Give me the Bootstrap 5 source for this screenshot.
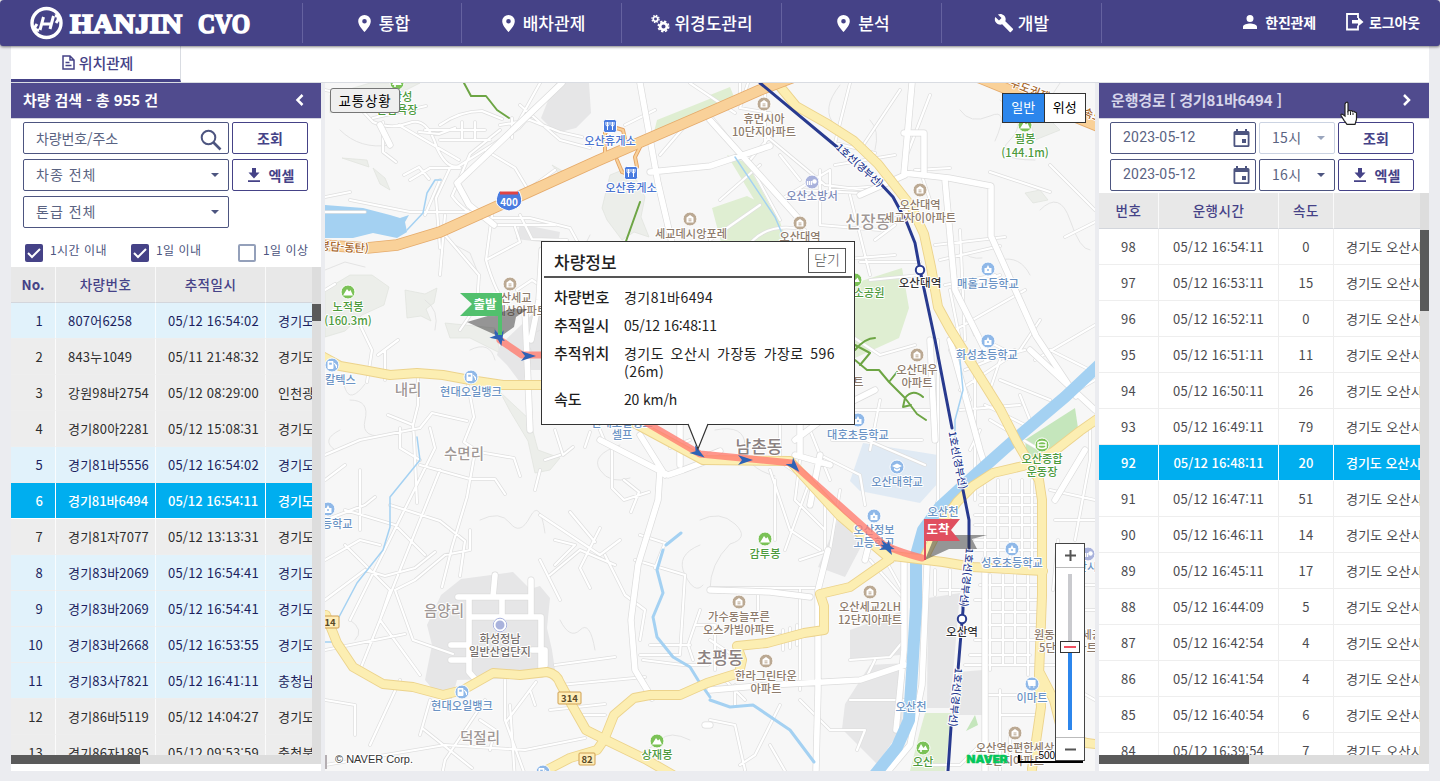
<!DOCTYPE html>
<html lang="ko">
<head>
<meta charset="utf-8">
<meta name="viewport" content="width=device-width, initial-scale=1">
<title>HANJIN CVO</title>
<link href="https://cdn.jsdelivr.net/npm/bootstrap@5.3.0/dist/css/bootstrap.min.css" rel="stylesheet">
<style>
:root{--navy:#454287;--panel:#504b8e;--ink:#2b2b2b;--line:#4d5580}
body{font-family:"Noto Sans CJK KR","Liberation Sans",sans-serif;font-size:13px;line-height:1.2;background:#ebecf0;color:var(--ink);height:781px;overflow:hidden}
svg{display:block;flex:none}
.topbar{height:46px;background:var(--navy);color:#fff;border-radius:4px 4px 3px 3px;box-shadow:0 1px 3px rgba(0,0,0,.5);position:relative;z-index:3}
.brand{width:303px;padding-left:29px}
.menu-item{width:160px;height:40px;border-left:1px solid #6562a0;font-size:17px;font-weight:500;gap:8px;padding-left:4px}
.menu-item.first{width:159px}
.menu-end{height:40px;width:1px;background:#6562a0}
.user-item{font-size:14px;font-weight:700;letter-spacing:-.15px}
.shell{margin:0 11px;height:725px}
.tabs{height:37px;background:#fff;border-bottom:1px solid #d9dce2}
.tab-on{width:170px;height:36px;border-right:1px solid #d9dce2;border-bottom:3px solid var(--navy);color:var(--navy);font-size:15px;font-weight:500;gap:4px;letter-spacing:-.2px;padding-left:4px}
.side{background:#fff;height:688px;overflow:hidden}
.side-l{width:310px}.side-r{width:330px}
.side-h{height:36px;background:var(--panel);color:#fff;font-size:15px;font-weight:700;padding:0 17px 2px 12px;border-bottom:1px solid #d4d5df;letter-spacing:-.07px}
.box{height:32px;border:1px solid var(--line);border-radius:2px;font-size:14px;color:#5a6382;background:#fff;padding-left:12px}
.box>span{margin-top:-2px}
.box.off{border-color:#cbd3e2}
.tri{width:0;height:0;border:4px solid transparent;border-top-color:var(--line);border-bottom:0}
.off .tri{border-top-color:#9aa5bd}
.act{width:76px;height:32px;border:1px solid var(--navy);border-radius:2px;color:var(--navy);font-size:14px;font-weight:700;background:#fff;padding:0}
.act.d-flex{gap:9px;padding-left:2px}
.rob{font-family:Roboto,sans-serif;font-size:14px;letter-spacing:.2px}
.chk{width:18px;height:18px;border-radius:2px;background:var(--navy)}
.chk.none{background:#fff;border:2px solid #94a0ba}
.chk-t{font-size:12px;letter-spacing:.45px;color:#4d5580;margin-top:-1px}
.grid-wrap{overflow:hidden;position:relative}
.grid{table-layout:fixed;margin:0;font-size:13px;letter-spacing:.2px;--bs-table-bg:transparent;white-space:nowrap;border-collapse:separate;border-spacing:0}
.grid>thead>tr>th,.grid>tbody>tr>td{height:36px;padding:1px 12px 0;vertical-align:middle;border:0;border-right:1px solid rgba(255,255,255,.75);overflow:hidden;box-shadow:none;color:inherit;background:transparent;line-height:18px}
.grid thead th{background:#e8e8e8!important;color:var(--navy)!important;font-weight:500;font-size:13.5px;letter-spacing:.5px;text-align:center;border-bottom:1px solid #d3d6dc!important;padding:0 12px 1px!important}
.grid tbody td{border-bottom:1px solid #eee!important}
.g-l .near{background:#e1f2fb;color:#1b1f5e}
.g-l .far{background:#ededed;color:#2d2d2d}
.g-r tbody tr{color:#4b4b4f}
.g-r tbody td{border-right-color:#eee!important;text-align:center}
.grid tbody tr.sel{background:#00aeef;color:#fff;font-weight:500;letter-spacing:-.03px}
.grid tbody tr.sel td{border-right-color:#fff!important;border-bottom-color:#fff!important}
.vbar{width:9px;background:#ddd}
.thumb-b{background:#5a5a5a}
.hbar{height:9px;background:#ddd}
.map{width:770px;height:688px;margin:0 4px;position:relative;background:#f7f7f7;overflow:hidden}
.over{position:absolute}
.traffic{left:5px;top:5px;width:70px;height:25px;border:1px solid #767676;border-radius:3px;background:#efefef;color:#000;font-size:13.5px;letter-spacing:.8px;padding:0;line-height:23px;text-align:center}
.types{left:677px;top:10px;width:84px;height:30px;border:1px solid #333;background:#fff;color:#000;font-size:13px}
.types span{padding-bottom:2px}
.types .on{background:#2c86ec;color:#fff;border-right:1px solid #333}
.info{left:216px;top:158px;width:314px;height:184px;background:#fff;border:1px solid #333;padding:5px 2px}
.info-h{height:31px;border-bottom:2px solid #555;padding:0 6px 3px 10px;font-size:17px;font-weight:500;color:#222}
.info-x{width:38px;height:25px;border:1px solid #555;font-size:14px;color:#555;font-weight:300;padding-bottom:1px}
.info-k{width:70px;font-size:15px;font-weight:500;color:#1d1d1d}
.info-v{font-size:14px;letter-spacing:.45px;color:#222;line-height:18px}
.info-v.num{letter-spacing:-.15px}
.info-v.long{word-spacing:2.2px}
.zoomer{left:730px;top:460px;width:30px;height:218px;border:1px solid #444;background:#fff}
/* map drawing */
.map text{font-family:"Noto Sans CJK KR",sans-serif;text-anchor:middle;paint-order:stroke;stroke:#fff;stroke-width:2px;stroke-linejoin:round;font-weight:500}
.map text.flat{stroke:none;font-weight:700}
.r{fill:none;stroke-linejoin:round;stroke-linecap:round}
</style>
</head>
<body>
<header class="topbar d-flex align-items-center">
  <div class="brand flex-shrink-0">
    <svg width="228" height="40" viewBox="29 3 228 40">
      <circle cx="46.500" cy="23" r="14.500" fill="none" stroke="#fff" stroke-width="3.400"/>
      <path d="M43.500 17 40 30M53.500 16 50 29M42 24h10M39 30q-4 1-4-3l2-3M55 16q4-1 3 4l-2 3" fill="none" stroke="#fff" stroke-width="3"/>
      <g font-family="Liberation Serif" font-weight="700" font-size="28" fill="#fff" stroke="#fff" stroke-width="1.700"><text x="70" y="32.500" textLength="112" lengthAdjust="spacingAndGlyphs">HANJIN</text><text x="198" y="32.500" textLength="52" lengthAdjust="spacingAndGlyphs">CVO</text></g>
    </svg>
  </div>
  <nav class="d-flex align-items-center flex-grow-1" style="margin-left:-1px">
    <a class="menu-item first d-flex align-items-center justify-content-center text-white text-decoration-none"><svg width="13" height="17" viewBox="0 0 13 17"><path fill="#fff" fill-rule="evenodd" d="M6.500 0A6.300 6.300 0 0 0 .2 6.300C.2 11 6.500 17 6.500 17s6.300-6 6.300-10.700A6.300 6.300 0 0 0 6.500 0Zm0 4a2.300 2.300 0 1 1 0 4.600 2.300 2.300 0 0 1 0-4.600Z"/></svg>통합</a>
    <a class="menu-item d-flex align-items-center justify-content-center text-white text-decoration-none"><svg width="13" height="17" viewBox="0 0 13 17"><path fill="#fff" fill-rule="evenodd" d="M6.500 0A6.300 6.300 0 0 0 .2 6.300C.2 11 6.500 17 6.500 17s6.300-6 6.300-10.700A6.300 6.300 0 0 0 6.500 0Zm0 4a2.300 2.300 0 1 1 0 4.600 2.300 2.300 0 0 1 0-4.600Z"/></svg>배차관제</a>
    <a class="menu-item d-flex align-items-center justify-content-center text-white text-decoration-none" style="gap:4px;padding-left:1px"><svg width="19" height="19" viewBox="0 0 19 19" fill="none" stroke="#fff"><circle cx="4.500" cy="5" r="2.300" stroke-width="1.700"/><circle cx="4.500" cy="5" r="3.600" stroke-width="1.200" stroke-dasharray="1.500 1.330"/><circle cx="12.500" cy="12.500" r="3.400" stroke-width="2.700"/><circle cx="12.500" cy="12.500" r="5.200" stroke-width="1.700" stroke-dasharray="2.300 1.780"/></svg>위경도관리</a>
    <a class="menu-item d-flex align-items-center justify-content-center text-white text-decoration-none"><svg width="13" height="17" viewBox="0 0 13 17"><path fill="#fff" fill-rule="evenodd" d="M6.500 0A6.300 6.300 0 0 0 .2 6.300C.2 11 6.500 17 6.500 17s6.300-6 6.300-10.700A6.300 6.300 0 0 0 6.500 0Zm0 4a2.300 2.300 0 1 1 0 4.600 2.300 2.300 0 0 1 0-4.600Z"/></svg>분석</a>
    <a class="menu-item d-flex align-items-center justify-content-center text-white text-decoration-none" style="gap:4px;padding-left:0"><svg width="20" height="20" viewBox="0 0 24 24"><path fill="#fff" d="m22.700 19-9.100-9.100c.9-2.300.4-5-1.500-6.900-2-2-5-2.400-7.400-1.300L9 6 6 9 1.600 4.700C.4 7.100.9 10.100 2.900 12.100c1.900 1.900 4.600 2.400 6.900 1.500l9.100 9.100c.4.400 1 .4 1.400 0l2.300-2.300c.5-.4.500-1.100.1-1.400Z"/></svg>개발</a>
    <span class="menu-end"></span>
  </nav>
  <a class="user-item d-flex align-items-center text-white text-decoration-none" style="gap:8px;margin-right:30px;padding-bottom:2px"><svg width="14" height="14" viewBox="0 0 14 14"><path fill="#fff" d="M7 0a3.500 3.500 0 1 0 0 7 3.500 3.500 0 0 0 0-7ZM0 14v-2.200C0 9.500 4.600 8.500 7 8.500s7 1 7 3.300V14Z"/></svg>한진관제</a>
  <a class="user-item d-flex align-items-center text-white text-decoration-none" style="gap:5px;margin-right:20px;padding-bottom:2px"><svg width="18" height="18" viewBox="0 0 18 18"><path fill="none" stroke="#fff" stroke-width="1.800" d="M12 5V1H1v15.500h11v-4"/><path fill="#fff" d="M6 7h6V4l5.500 5L12 13.500V10.500H6Z"/></svg>로그아웃</a>
</header>

<main class="shell">
  <div class="tabs"><div class="tab-on d-flex align-items-center justify-content-center"><svg width="13" height="15" viewBox="0 0 13 15" fill="none" stroke="#454287" stroke-width="1.500"><path d="M1 1h7l4 4v9H1ZM8 1v4h4M3.500 7.500h4M3.500 10.500h6"/></svg>위치관제</div></div>
  <div class="d-flex">
    <section class="side side-l d-flex flex-column">
      <div class="side-h d-flex align-items-center justify-content-between flex-shrink-0"><span>차량 검색 - 총 955 건</span><svg width="9" height="14" viewBox="0 0 9 14"><path d="M7.500 2 2.500 7l5 5" fill="none" stroke="#fff" stroke-width="2.500"/></svg></div>
      <div class="d-flex flex-column flex-shrink-0" style="height:148px;padding:3px 0 0 12px;gap:5px">
        <div class="d-flex" style="gap:3px"><div class="box d-flex align-items-center justify-content-between" style="width:206px;padding-right:6px;letter-spacing:-.1px"><span class="mt-0">차량번호/주소</span><svg width="22" height="22" viewBox="0 0 22 22" style="margin-top:4px"><circle cx="8.500" cy="8.500" r="6.800" fill="none" stroke="#4d5580" stroke-width="2"/><path d="m13.500 13.500 7 7" stroke="#4d5580" stroke-width="2.600"/></svg></div><button class="act">조회</button></div>
        <div class="d-flex" style="gap:3px"><div class="box d-flex align-items-center justify-content-between" style="width:206px;padding-right:9px;letter-spacing:1px"><span>차종 전체</span><i class="tri"></i></div><button class="act d-flex align-items-center justify-content-center"><svg width="12" height="14" viewBox="0 0 12 14"><path fill="#454287" d="M4 0h4v4.500h3.500L6 10.500.5 4.500H4ZM0 12.300h12V14H0Z"/></svg>엑셀</button></div>
        <div class="box d-flex align-items-center justify-content-between" style="width:206px;padding-right:9px;letter-spacing:1px"><span>톤급 전체</span><i class="tri"></i></div>
        <div class="d-flex" style="padding:11px 0 0 2px">
          <div class="d-flex" style="width:106px;gap:7px"><span class="chk"><svg width="18" height="18"><path d="m3 9 4 4 8-8" fill="none" stroke="#fff" stroke-width="2"/></svg></span><span class="chk-t">1시간 이내</span></div>
          <div class="d-flex" style="width:107px;gap:7px"><span class="chk"><svg width="18" height="18"><path d="m3 9 4 4 8-8" fill="none" stroke="#fff" stroke-width="2"/></svg></span><span class="chk-t">1일 이내</span></div>
          <div class="d-flex" style="gap:7px"><span class="chk none"></span><span class="chk-t">1일 이상</span></div>
        </div>
      </div>
      <div class="d-flex" style="height:488px">
        <div class="grid-wrap" style="width:301px"><table class="table grid g-l" style="width:420px"><colgroup><col style="width:45px"><col style="width:100px"><col style="width:110px"><col></colgroup><thead><tr><th class="fw-bold" style="padding-left:10px!important;padding-right:10px!important;letter-spacing:0">No.</th><th>차량번호</th><th>추적일시</th><th></th></tr></thead><tbody id="cars"></tbody></table></div>
        <div class="vbar" style="padding-top:37px"><div class="thumb-b" style="height:17px"></div></div>
      </div>
      <div class="hbar"><div class="thumb-b" style="width:129px;height:9px"></div></div>
    </section>

    <section class="map">
      <svg width="770" height="688" viewBox="325 83 770 688">
        <defs>
          <g id="minor">
            <path d="M325 90q18 3 28 12t20 20M373 122q18 8 36 1t28 25q10 22 22 18l60-38 40-45M383 122v30l13 10M373 118l53-12M399 125l60 35M425 130h60M450 168l-14 30 4 50M410 180l20-12 30 0M500 130l-30 24-18 42q10 14 28 22h50l40 10 12 22M455 128l-16 6-20-2M440 125q20-14 42-14l20 8M440 140h50M462 122v18M475 122v18M500 125l30-5 30 12 22 5M512 118v20M540 83l-25 45M520 105l40 35 30 8M325 212h40M350 200l60 12h70l45-20 30-22M440 180l-15 35M325 197l25-5M404 175l15-8 10 12"/>
            <path d="M492 215l-6 45q10 35 24 50M486 260l34-18-5-15M517 290l15-10 15 10M445 215l-5 60M445 235l34 40-2 30-17 25M520 215l12 24 35 1M325 290l10-6M485 150l30 18 12 20M495 225h60"/>
            <path d="M360 325l12 25-5 32M378 355l20-15M385 350v30M418 375v30l-5 20 1 13 3 65M413 425l-25-10M325 455l35-15 60-12 12-15 35 8M468 385l6 32-10 25 15 10 35 6 6 18M325 520l40-15 10-8M360 470v60M325 480l20-15M345 510l50 15 30 30M420 460l-20-12v-20M420 465l50 14h25l10 15M440 470l-80 200M430 428l5 20-85 172M325 560l35-20 20 5M475 452l-8 45-15 50-10 40M390 505l50 16 25 20-5 35M325 600l40-30 20 6 30-8 20-16M345 545l45 45-10 30 40 55M395 590l20-10 30-25 25-5v-20M395 590l18 50 40 14M325 650l80-16"/>
            <path d="M540 515l60 40 20-15M555 540l20 5-20 20M570 512l25 30M600 528l-20 40 10 20M580 550l35 15M540 470l-5 20M612 450v38l12 12 25-8M624 480l15 12-8 20M540 560l20 40M640 535l25 8-10 25M550 575l30-25M605 555l20 40 20 15-5 30M650 645h40M635 560l50 15-5 80h-40M643 660l40 5h25M700 610l-12 35 5 15M695 625h20v45M560 685l85-8M536 682l-30 40M505 680v40l20 55M555 665l60-8M485 700l-40 60-3 15M325 765l120-20 80 5 60-12M430 700l-10 35M400 680l-30 65M325 700l30 5v30M422 728l50 40M480 720l15 10-5 20M530 690l5 15M550 710l55-6M580 715h25M510 705l5 75"/>
            <path d="M690 83l45 30M710 115l40 50 30 55M750 160l25-30M800 180l-20-25M765 135l60 50 40 5M850 160l25 15M720 200l40-35M780 200l50-30v20l50-4M820 170v55l60 5M850 195l20 80M835 165l60-10M800 190l60 3M850 83l-15 60 40 10M900 90l-40 60M905 160l25-65M915 170l35-2M930 200l-10-30M710 240l50-35M745 250q20-30 60-20M880 220l30-10M875 240l20-15M860 262h60M835 260l60-5M870 280l50-5M935 245l70-8M940 260l60-14M945 285l50-10M960 230l5 110M955 290l45-15M990 172l60 20M955 285l20 50 40 20M955 330l70-40M1065 237l30-15M1050 165l45 45M1090 370l-40-20M1095 325l-60 35"/>
            <path d="M870 450l10-50M850 335l30 20 35-10M855 435l70 30M850 410h80M832 440h90M810 430l20 50M780 380v80M800 460l-5 40 30 30M775 480v60M785 465l30 20M770 470l20 60 30 20M820 455l40 20 5 30M810 480l-25 70M938 340v160l-25 70M975 360v140M965 370l50-20M960 390l60-40 20-30M985 360l40-10M960 410l60-5M960 340l-10-50M980 495h60M980 505h60M975 515h70M975 525h70M975 540h70M975 550h70M985 485v85M998 480v90M1010 480v90M1022 480v90M1032 480v90M980 585h60M975 600h65M990 612h50M985 625h55M975 640h60M970 655h60M965 665h90M990 575v95M1003 575v90M1015 575v90M1028 575v100M1090 430v30l-15 80M1050 490l45 10M1055 520h40M1058 540l-5 50M1070 585h25M1060 610h35M940 590h20M935 570v25M950 570v25M1000 690v80M987 695h55M1000 715h35M1010 730v30"/>
            <path d="M765 83v60M740 83v20M748 83l-8 25 30 5M690 120l-30 35M655 110l-30 15M1060 400l35-20M990 420l50 30M980 430l-10 20M1020 395l10 25M985 405l40 20M950 350l20 50M1000 360l-10 30M1000 380l50 20M800 590v100M780 635h35M783 630v20M790 628v20M797 625v20M710 588h110M758 590v20M710 640l30 20M710 720l25 5 10 45M735 705v-20M780 705l-25 50-15 10M745 700l-20-20M800 700l30 30h35l-8 20M850 660l40-3 15-18M850 700h55M865 680l10-20M870 560l35 40M880 550l25 45M865 575l30-15M800 560l30-10 10-60M825 500v50M1060 680l35 20M1065 700v60M920 765h40l20-20M770 745l15 26"/>
            <path d="M555 430l8 25 10-8M590 432l-5 15M600 430l5 12M560 455l-15 5M690 440l-20 8"/>
          </g>
          <g id="mid">
            <path d="M640 83l18 100 14 60M650 172l60-6 60-20M380 125l10 20M562 83l-105 100 12 22 25 20M542 250l-3 50-8 40M525 310l5 120M600 440l68 35 15-5 26-10M710 455l10-4M660 470l-2 30-20 65-7 55 4 50 17 28M640 435l25 40M680 420v45M912 83l-8 90 45 5 42 8v50l45 100 40 60M945 180l10 110 30 60M904 133h20v40M905 175l-45 20M710 120l90 100M800 250v205M795 455l35 10M795 440l40-30 40-20M950 340l30 110 8 25M1030 350l65 60M820 455l-10 50M828 550l-10 40v100l-2 80M710 725h-5M710 690l60-5 90-5 45-15M904 560v90l-8 80M927 565l-5 120-12 60-25 30M985 560v210M710 590l60 2 40 5M870 540l-5 20M1085 450l-30 50M930 340l5 100"/>
            <path d="M469 597v75l7 8M458 597h73M502 597v20M469 617h72M531 580v37M541 617v55M532 650h13v15M451 645h18M451 660h18M495 575l-2 22"/>
          </g>
          <g id="major">
            <path d="M778 84l18 22 30 17 28 18 24 23 33 42 13 28 7 33 7 40 12 22 50 80 17 33 22 38 3 20v95l-3 80 2 32-9 62M1040 673l14 27 8 32q18 12 34 12M1100 417l-20 14-27 21-30 14-30 7-20 13-16 16-17 24-15 30"/>
            <path d="M320 355l20 11 23 4 27 5 27-2 26 2 27 5 33 5h20l70 0 30 32 80 43 87 1 50 55 50 43 -40 28 -30 7 4 12v24l-20 3-37 10-30 3 5 14-3 13-32 10-27 12h-30l-16 3-20 17-10 25-7 10-27 8-23 12M893 556l50 6 30 5 70 4"/>
            <path d="M326 615l11 28 16 24 30 17 30 3 30 8 20-5 30-17 27 2 27-3q10 2 13 11l13 24 13 23 24 12 35 17 28 16"/>
          </g>
          <g id="hw"><path d="M320 245l47 3 30-3 43-13 60-27 97-44 46-20 67-29 50-22 34-13M980 78l120 49"/></g>
          <g id="ramp"><path d="M605 156v-23l8-6 10 3 3 14M617 160l5 12 8 3 7-8-2-10 5-10"/></g>
          <g id="apt"><circle r="7" fill="#bba993" stroke="#fff"/><path d="M-3.500 3.500v-5L0-4l3.500 2.500v5z" fill="#fff"/><path d="M-1.500 0h3M-1.500 1.800h3" stroke="#bba993"/></g>
          <g id="sch"><circle r="7" fill="#8fb8e8" stroke="#fff"/><path d="M-3.500 4v-5h2L0-4l1.500 3h2v5z" fill="#fff"/><circle cy="1" r="1" fill="#8fb8e8"/></g>
          <g id="uni"><circle r="7" fill="#8fb8e8" stroke="#fff"/><path d="M-5-1 0-3.500 5-1 0 1.500zM-3 1 0 2.500 3 1v2L0 4.500-3 3z" fill="#fff"/></g>
          <g id="cart"><circle r="7" fill="#8fb8e8" stroke="#fff"/><path d="M-4-3.500h7v5h-6zM-3 3h1.500M1 3h1.500" fill="#fff" stroke="#fff" stroke-width="1.200"/></g>
          <g id="fire"><circle r="7" fill="#a9b2dc" stroke="#fff"/><path d="M-4.500 3v-4M-2.500 3v-4M-.5 3v-4" stroke="#fff" stroke-width="1.300"/><circle cx="2.500" cy="-.5" r="2.200" fill="#fff"/></g>
          <g id="gas"><circle r="7" fill="#8fb8e8" stroke="#fff"/><path d="M-4-3.500h5v7h-5zM2-2l2.500 2v3" fill="#fff" stroke="#fff"/><path d="M-2.800-2.300h2.600v2h-2.600z" fill="#8fb8e8"/></g>
          <g id="mt"><circle r="7" fill="#7bc257" stroke="#fff"/><path d="M-5 3.500-1-3l2 2.500L2.500-2 5 3.500z" fill="#fff"/></g>
          <g id="tree"><circle r="7" fill="#7bc257" stroke="#fff"/><path d="M-2-4-5 2h2.200v2h1.600V2H4.800L2.500-2.500.5 0z" fill="#fff"/></g>
          <g id="stad"><circle r="7" fill="#7bc257" stroke="#fff"/><path d="M-4-2.500q4-2 8 0v5q-4 2-8 0zM-4 0h8" fill="none" stroke="#fff" stroke-width="1.500"/></g>
          <g id="rest"><rect x="-6.500" y="-6.500" width="13" height="13" rx="2" fill="#4a7ce0" stroke="#fff"/><path d="M-4-4v2.500q0 1.500 1.500 1.500t1.500-1.500V-4M-2.500-4v8M1-4v2.500Q1 0 2.500 0T4-1.500V-4M2.500-4v8" fill="none" stroke="#fff"/></g>
          <path id="dart" d="M8 0-7-5-3 0-7 5z" fill="#2e62b5"/>
        </defs>
        <rect x="325" y="83" width="770" height="688" fill="#f7f7f7"/>
        <g fill="#eceeea" stroke="#e0e3dd" stroke-width=".7">
          <path d="M330 95l40-12h50l-20 10-30 12-40 8z"/><path d="M325 290l25-15 22 0 17 12-5 18-22 10-17 16-20 6z"/><path d="M405 290l20 4 12-6-3 15-8 6 5 12-10-5-14 2z"/><path d="M610 175l20-8 15 30-4 20 8 20-15-5-12 8-15-20-5-12z"/><path d="M445 323l50 5 5 25-30-15-20 0z"/><path d="M500 392l30 28 8 30 22 8-10 12-15 3-7-32-18-30z"/><path d="M342 158l25 2 2 7zM373 168l12 10 5 12-10-6zM552 165l14 8-6 2z"/><path d="M1030 120l15-5 15 15-25 10zM1025 193l15-3 8 10-15 3z"/>
        </g>
        <g fill="#dfeed2"><path d="M657 120l55-22 15 5-40 25-35 12zM710 95l20-8 5 12-20 8zM712 208l35-12 30 15 10 35h-65zM727 155l20 8 35 65 12 25-6 2zM855 283l47-15 7 40-10 30-44 20z"/><path d="M925 713h27l-7 58h-35l10-40z"/></g>
        <path d="M1025 440l50-32 3 20-30 30-20 10z" fill="#c5e6bc"/><path d="M975 715l3 10-12 6z" fill="#c5e6bc"/>
        <path d="M863 443l75 12v28l-18 20-60-12-10-10z" fill="#e0eaf4"/>
        <g fill="#e6e6e7"><path d="M565 83h24l2 30-15 15-20 5-15-15 10-25zM520 224l40 8-2 12-42-5zM500 345l42-40v65l-15 0-5 15-15-20-10-10z"/><path d="M441 595l20-16 52-7 17 17 10-3 10 12-3 30 5 22 3 20-13 8-85 2-6 22-12-5-14-17 7-35-5-20z"/><path d="M839 517l26 22-20 38-27-10zM850 630l55-20-5 45-50 5zM870 665l35-2-3 65-25 36-35-35 3-25zM928 598l32-5-10 115h-23zM958 672l25-2v45h-30z"/></g>
        <path d="M325 205l38 3 27 7 10 3 9-3-4 7 2 10-10 6-24-5-20 5h-28z" fill="#a4d1f2"/>
        <g class="r" stroke="#dedede" stroke-width=".8"><path d="M325 270l20-8 20 5M455 245l15 8 10 25M340 130q20 20 50 15M560 265l20-10 10-20M325 380q15-8 20 8t20-4M350 400q20 0 15 20t25 15M540 330q-20 10-5 25M470 350q20-10 25 10M480 520q20-10 30 3t20-6 15 16M620 445q-30 10-20 25t30 8M700 520q20-10 35 4t-5 20q-20 20-20 45M715 430q30-6 30 16t30 30M840 85q-20 25-5 40M960 110q10 15 30 6t5 25M1000 100q30 20 10 40t25 20M1040 210q20-20 30 10t20 30M1000 260q20-5 30 15M960 250q10 10 22 8M950 630q15 5 25 0M690 740q-20-10-30 0t-25 15M700 545q-25 10-15 30t18 10M340 430q-20 10-5 20M560 620q10 20 20 10t15 20M425 300q15 10 10 30M350 620q15 10 5 20M870 120q10 10 5 30M1060 83q-15 20-10 30"/></g>
        <g class="r"><use href="#minor" stroke="#dfdfdf" stroke-width="3.600"/><use href="#minor" stroke="#fff" stroke-width="2.200"/><use href="#mid" stroke="#dcdcdc" stroke-width="7"/><use href="#mid" stroke="#fff" stroke-width="5.600"/></g>
        <g class="r" stroke="#a4d1f2"><path stroke-width="1.500" d="M407 230l16-17 4-20 8-13h6M417 437l3 23-30 37v30l-7 23-26 33-18 34M735 157l40 60 15 35M325 642h8M940 310l18 30 5 50-8 30v20"/><path stroke-width="3" d="M663 550l-6 20 6 23-10 24 4 20 16 20 17 10 8 13 12 17M710 700l20 7 23-2 37 25 24 32M681 533l-15 12"/><path stroke-width="12" d="M1099 365l-34 32-45 38-45 40-35 32-17 23-7 25v52l-4 66-3 47-12 27-24 30"/></g>
        <g class="r"><use href="#major" stroke="#ecd38c" stroke-width="10"/><use href="#major" stroke="#fceeb2" stroke-width="8.200"/><use href="#ramp" stroke="#e3a265" stroke-width="4"/><use href="#hw" stroke="#e5ab6c" stroke-width="11.500"/><use href="#hw" stroke="#f9d199" stroke-width="9.800"/><use href="#ramp" stroke="#f9d199" stroke-width="2.200"/></g>
        <g class="r" stroke="#6da544" stroke-width="2"><path d="M464 83l7 13h15l11 14 12 8M640 202l-15 42M855 360l12 10h12l10 12 16 16 12 16 9 6M889 382l8-10M905 398q8-10 18-1M855 345l15 8-10 12M855 350q10-12 20-12M905 398l-2 9 8-2"/></g>
        <g class="r" stroke="#283a8f" stroke-width="3"><path d="M760 83l77 64M880 183l13 14 14 26 8 20 5 27 15 70 17 88M963 490l6 30v30M963 600v10l-5 60M951 727l-3 44"/></g>
        <g id="pins"></g><g id="labels"></g>
        <path class="r" d="M500 340l22 15h30M640 419l60 35 92 9 92 82q18 8 38 13" stroke="#ff7d70" stroke-opacity=".8" stroke-width="7"/>
        <path d="M467 322l45-13 16 0-12 8-2 10-14 10zM925 560l10-25 52 0-15 4 5 10h-28z" fill="#333" opacity=".5"/>
        <path d="M460 293h42v23h-42l12-12z" fill="#52c06d"/><path d="M500 300v36" stroke="#52c06d" stroke-width="4"/>
        <path d="M924 560v-41h36l-9 11 9 11h-34v19z" fill="#e04f5f"/>
        <use href="#dart" transform="translate(500 338) rotate(80)"/><use href="#dart" transform="translate(498 337) rotate(30)"/><use href="#dart" transform="translate(528 356)"/><use href="#dart" transform="translate(698 453) rotate(35)"/><use href="#dart" transform="translate(745 460)"/><use href="#dart" transform="translate(794 466) rotate(48)"/><use href="#dart" transform="translate(888 548) rotate(60)"/><use href="#dart" transform="translate(887 547) rotate(15)"/>
        <path d="M500 318v17" stroke="#52c06d" stroke-width="4"/>
        <g fill="#fff" stroke="#283a8f" stroke-width="2"><circle cx="920" cy="270" r="4.200"/><circle cx="962" cy="619" r="4.200"/></g>
        <path d="M499 191q10 3 20 0 4 8 2 13-3 5-12 7-9-2-12-7-2-5 2-13z" fill="#4a7ce0" stroke="#fff"/><path d="M500 191.500h18v3h-18z" fill="#e04444"/>
        <circle cx="500" cy="625" r="6" fill="#a9b2dc" stroke="#fff" stroke-width="3"/><circle cx="500" cy="625" r="6.800" fill="none" stroke="#a9b2dc"/>
        <g fill="#ffedb8" stroke="#cf9f50"><rect x="319" y="616" width="20" height="12" rx="1"/><rect x="558" y="692" width="23" height="12" rx="1"/><rect x="579" y="753" width="16" height="12" rx="1"/></g>
        <g font-size="9.500" fill="#5a4a28"><text class="flat" x="330" y="625.500">14</text><text class="flat" x="569.500" y="701.500">314</text><text class="flat" x="587" y="762.500">82</text></g>
        <text class="flat" x="509" y="206" font-size="10" fill="#fff">400</text>
        <text class="flat" x="485" y="309" font-size="12.500" fill="#fff">출발</text><text class="flat" x="938" y="534" font-size="12.500" fill="#fff">도착</text>
        <path d="M325 755h2v14h-2z" fill="#b4aeb2"/>
        <path d="M1019 755v7h63v-5" fill="none" stroke="#000" stroke-width="2"/>
        <text x="1051" y="759" font-size="10" fill="#000" style="font-family:Liberation Sans;font-weight:400">500m</text>
        <text x="987" y="763" font-size="11" fill="#03c75a" textLength="41" lengthAdjust="spacingAndGlyphs" style="font-family:Inter,sans-serif;font-weight:900;stroke:#03c75a;stroke-width:.5px">NAVER</text>
        <text x="374" y="763" font-size="11" fill="#333" style="font-family:Liberation Sans;font-weight:400" textLength="78" lengthAdjust="spacingAndGlyphs">© NAVER Corp.</text>
      </svg>
      <button class="over traffic">교통상황</button>
      <div class="over types d-flex"><span class="on flex-fill d-flex align-items-center justify-content-center">일반</span><span class="flex-fill d-flex align-items-center justify-content-center">위성</span></div>
      <div class="over info">
        <div class="info-h d-flex align-items-center justify-content-between"><span class="mt-1">차량정보</span><span class="info-x d-flex align-items-center justify-content-center">닫기</span></div>
        <div class="d-flex flex-column" style="padding:10px 0 0 10px;gap:10px">
          <div class="d-flex"><div class="info-k">차량번호</div><div class="info-v">경기81바6494</div></div>
          <div class="d-flex"><div class="info-k">추적일시</div><div class="info-v num">05/12 16:48:11</div></div>
          <div class="d-flex"><div class="info-k">추적위치</div><div class="info-v long">경기도 오산시 가장동 가장로 596<br>(26m)</div></div>
          <div class="d-flex"><div class="info-k">속도</div><div class="info-v num">20 km/h</div></div>
        </div>
      </div>
      <svg class="over" style="left:362px;top:340px" width="22" height="28"><path d="M1 1 11 26 21 1" fill="#fff" stroke="#333" stroke-width="1.200"/><path d="M2 0h18v2H2z" fill="#fff"/></svg>
      <div class="over zoomer">
        <svg width="28" height="216"><path d="M0 23.500h28M0 193.500h28" stroke="#bbb"/><path d="M9 11.500h11M14.500 6v11M9 205.500h11" stroke="#555" stroke-width="2"/><path d="M14 30v75" stroke="#c9cace" stroke-width="4"/><path d="M14 105v81" stroke="#2c86ec" stroke-width="4"/><rect x="4.500" y="97.500" width="19" height="11" fill="#fff" stroke="#333"/><path d="M8 103h12" stroke="#f04f5f" stroke-width="2"/></svg>
      </div>
    </section>

    <section class="side side-r d-flex flex-column">
      <div class="side-h d-flex align-items-center justify-content-between flex-shrink-0"><span style="color:#d6d5ea;letter-spacing:-.15px">운행경로 [ 경기81바6494 ]</span><svg width="10" height="14" viewBox="0 0 10 14"><path d="m2 2 5 5-5 5" fill="none" stroke="#fff" stroke-width="2.500"/></svg></div>
      <div class="d-flex flex-column flex-shrink-0" style="height:74px;padding:3px 0 0 11px;gap:5px">
        <div class="d-flex" style="gap:3px"><div class="box rob d-flex align-items-center justify-content-between" style="width:146px;padding-right:5px"><span>2023-05-12</span><svg width="17" height="18" viewBox="0 0 17 18"><path fill="#4d5580" fill-rule="evenodd" d="M3 0h2v2h7V0h2v2h1q1.500 0 1.500 1.500v13Q16.500 18 15 18H2Q.5 18 .5 16.500v-13Q.5 2 2 2h1ZM2.300 6v10.200h12.400V6Z"/><path fill="#4d5580" d="M9 10h4v4H9z"/></svg></div><div class="box off d-flex align-items-center justify-content-between" style="width:76px;padding-right:9px;letter-spacing:.3px"><span>15시</span><i class="tri"></i></div><button class="act">조회</button></div>
        <div class="d-flex" style="gap:3px"><div class="box rob d-flex align-items-center justify-content-between" style="width:146px;padding-right:5px"><span>2023-05-12</span><svg width="17" height="18" viewBox="0 0 17 18"><path fill="#4d5580" fill-rule="evenodd" d="M3 0h2v2h7V0h2v2h1q1.500 0 1.500 1.500v13Q16.500 18 15 18H2Q.5 18 .5 16.500v-13Q.5 2 2 2h1ZM2.300 6v10.200h12.400V6Z"/><path fill="#4d5580" d="M9 10h4v4H9z"/></svg></div><div class="box d-flex align-items-center justify-content-between" style="width:76px;padding-right:9px;letter-spacing:.3px"><span>16시</span><i class="tri"></i></div><button class="act d-flex align-items-center justify-content-center"><svg width="12" height="14" viewBox="0 0 12 14"><path fill="#454287" d="M4 0h4v4.500h3.500L6 10.500.5 4.500H4ZM0 12.300h12V14H0Z"/></svg>엑셀</button></div>
      </div>
      <div class="d-flex" style="height:562px">
        <div class="grid-wrap" style="width:321px"><table class="table grid g-r" style="width:560px"><colgroup><col style="width:60px"><col style="width:120px"><col style="width:55px"><col></colgroup><thead><tr><th>번호</th><th>운행시간</th><th>속도</th><th></th></tr></thead><tbody id="runs"></tbody></table></div>
        <div class="vbar" style="padding-top:37px"><div class="thumb-b" style="height:81px"></div></div>
      </div>
      <div class="hbar"><div class="thumb-b" style="width:150px;height:9px"></div></div>
    </section>
  </div>
</main>
<svg class="over" style="left:1340px;top:101px;z-index:5" width="18" height="25" viewBox="0 0 18 25"><path d="M6 1.500q2-1 2 1V10q1-1.500 2.300 0 1.500-1 2.200.5 1.800-.8 2.500.8 1.800-.3 1.500 2v5l-1.500 5H7l-3-4-2.800-4.500q-.8-2 1.300-1.500L5 15V3Z" fill="#fff" stroke="#222" stroke-width="1.200"/><path d="M8 10v4M10.500 10.500V14M13 11.500V14" stroke="#222"/></svg>

<script src="https://cdn.jsdelivr.net/npm/bootstrap@5.3.0/dist/js/bootstrap.bundle.min.js"></script>
<script>
const cars=[['807어6258','05/12 16:54:02','경기도 오산시','near'],['843누1049','05/11 21:48:32','경기도 오산시','far'],['강원98바2754','05/12 08:29:00','인천광역시','far'],['경기80아2281','05/12 15:08:31','경기도 오산시','far'],['경기81바5556','05/12 16:54:02','경기도 오산시','near'],['경기81바6494','05/12 16:54:11','경기도 오산시','sel'],['경기81자7077','05/12 13:13:31','경기도 오산시','far'],['경기83바2069','05/12 16:54:41','경기도 오산시','near'],['경기83바2069','05/12 16:54:41','경기도 오산시','near'],['경기83바2668','05/12 16:53:55','경기도 오산시','near'],['경기83사7821','05/12 16:41:11','충청남도','near'],['경기86바5119','05/12 14:04:27','경기도 오산시','far'],['경기86자1895','05/12 09:53:59','충청북도','far']];
document.getElementById('cars').innerHTML=cars.map((c,i)=>`<tr class="${c[3]}"><td class="text-end">${i+1}</td><td>${c[0]}</td><td>${c[1]}</td><td>${c[2]}</td></tr>`).join('');
const runs=[['16:54:11',0],['16:53:11',15],['16:52:11',0],['16:51:11',11],['16:50:11',26],['16:49:11',79],['16:48:11',20],['16:47:11',51],['16:46:11',14],['16:45:11',17],['16:44:09',5],['16:42:54',4],['16:41:54',4],['16:40:54',6],['16:39:54',7]];
document.getElementById('runs').innerHTML=runs.map((r,i)=>`<tr class="${i==6?'sel':''}"><td>${98-i}</td><td>05/12 ${r[0]}</td><td>${r[1]}</td><td class="text-start">경기도 오산시 가장동</td></tr>`).join('');

const pins={apt:[[764,104],[690,219],[800,223],[920,190],[510,284],[917,355],[739,602],[766,661],[870,592],[1015,733]],sch:[[988,269],[858,420],[874,516],[988,341],[1012,549],[328,509]],uni:[[897,467]],cart:[[1032,684]],fire:[[812,182],[1088,554]],gas:[[332,365],[471,377],[462,692],[543,772]],mt:[[348,292],[765,539],[657,741],[1025,125]],tree:[[923,748],[397,83],[855,280]],stad:[[1042,445]],rest:[[610,126],[631,173]]};
document.getElementById('pins').innerHTML=Object.entries(pins).flatMap(([k,a])=>a.map(p=>`<use href="#${k}" x="${p[0]}" y="${p[1]}"/>`)).join('');
const C={a:'#8d7b6c',s:'#6b93c4',g:'#4d9a3c',b:'#4a74cf',t:'#a09896',d:'#8b8181',k:'#333',n:'#7d8bb8',i:'#76706e',r:'#283a8f',o:'#a8662a'};
// colour key, x, baseline y, size, text, rotation
const S=11.2;
const labels=[['g',402,101,S,'산성'],['g',397,114,S,'산림욕장'],['b',610,145,S,'오산휴게소'],['b',631,192,S,'오산휴게소'],['a',764,123,S,'휴먼시아'],['a',764,136,S,'10단지아파트'],['n',812,200,S,'오산소방서'],['a',691,238,S,'세교데시앙포레'],['a',800,241,S,'오산대역'],['t',868,228,16.5,'신장동'],['a',920,209,S,'오산대역'],['a',920,222,S,'세교자이아파트'],['g',1025,143,S,'필봉'],['g',1025,157,S,'(144.1m)'],['k',920,287,11.6,'오산대역'],['s',988,288,S,'매홀고등학교'],['g',869,297,S,'소공원'],['s',987,359,S,'화성초등학교'],['a',917,374,S,'오산대우'],['a',917,387,S,'아파트'],['a',848,386,S,'아파트'],['g',348,311,S,'노적봉'],['g',348,325,S,'(160.3m)'],['a',511,302,S,'오산세교'],['a',511,315,S,'신안세상아파트'],['s',333,384,S,'GS칼텍스'],['s',471,396,S,'현대오일뱅크'],['t',408,395,14.5,'내리'],['t',464,459,14.5,'수면리'],['s',622,427,S,'현대오일뱅크'],['s',622,439,S,'셀프'],['d',759,453,17,'남촌동'],['s',858,439,S,'대호초등학교'],['s',897,486,S,'오산대학교'],['g',1042,463,S,'오산종합'],['g',1042,476,S,'운동장'],['s',943,516,S,'오산천'],['s',874,534,S,'오산정보'],['s',874,547,S,'고등학교'],['g',765,558,S,'감투봉'],['s',1012,567,S,'성호초등학교'],['s',332,528,S,'초등학교'],['t',444,616,14.5,'음양리'],['i',500,643,S,'화성정남'],['i',500,656,S,'일반산업단지'],['s',462,710,S,'현대오일뱅크'],['t',480,743,14.5,'덕절리'],['g',657,759,S,'상재봉'],['a',739,621,S,'가수동늘푸른'],['a',739,634,S,'오스카빌아파트'],['d',720,664,17,'초평동'],['a',766,680,S,'한라그린타운'],['a',766,693,S,'아파트'],['a',870,611,S,'오산세교2LH'],['a',870,624,S,'12단지아파트'],['k',962,636,11.6,'오산역'],['s',911,711,S,'오산천'],['a',1068,639,S,'원동e편한세공'],['a',1068,652,S,'5단지아파트'],['s',1032,702,S,'이마트'],['a',1015,752,S,'오산역e편한세상'],['a',1015,765,S,'2단지아파트'],['g',923,766,S,'오산'],['s',1087,571,S,'산시'],['o',342,251,S,'(봉담-동탄)',4],['o',1060,106,S,'수도권제2순환고속도로',22],['r',857,168,10,'1호선(경부선)',42],['r',954,461,10,'1호선(경부선)',79],['r',963,577,10,'1호선(경부선)',96],['r',952,697,10,'1호선(경부선)',96]];
document.getElementById('labels').innerHTML=labels.map(l=>`<text x="${l[1]}" y="${l[2]}" font-size="${l[3]}" fill="${C[l[0]]}"${l[5]?` transform="rotate(${l[5]} ${l[1]} ${l[2]})"`:''}>${l[4]}</text>`).join('');
</script>
</body>
</html>
